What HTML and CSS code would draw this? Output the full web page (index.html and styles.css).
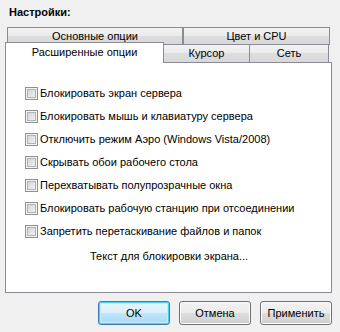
FILE: index.html
```html
<!DOCTYPE html>
<html lang="ru">
<head>
    <meta charset="UTF-8">
    <title>Настройки</title>
    <link rel="stylesheet" href="styles.css">
</head>
<body>
    <div class="dialog">
        <div class="title">Настройки:</div>

        <div class="tabs">
            <div class="tab-row back">
                <div class="tab t-main">Основные опции</div>
                <div class="tab t-color">Цвет и CPU</div>
            </div>
            <div class="tab-row front">
                <div class="tab active">Расширенные опции</div>
                <div class="tab t-cursor">Курсор</div>
                <div class="tab t-net">Сеть</div>
            </div>
        </div>

        <div class="panel">
            <label class="check"><input type="checkbox"> Блокировать экран сервера</label>
            <label class="check"><input type="checkbox"> Блокировать мышь и клавиатуру сервера</label>
            <label class="check"><input type="checkbox"> Отключить режим Аэро (Windows Vista/2008)</label>
            <label class="check"><input type="checkbox"> Скрывать обои рабочего стола</label>
            <label class="check"><input type="checkbox"> Перехватывать полупрозрачные окна</label>
            <label class="check"><input type="checkbox"> Блокировать рабочую станцию при отсоединении</label>
            <label class="check"><input type="checkbox"> Запретить перетаскивание файлов и папок</label>
            <div class="lock-text">Текст для блокировки экрана...</div>
        </div>

        <div class="buttons">
            <button class="btn default">OK</button>
            <button class="btn">Отмена</button>
            <button class="btn">Применить</button>
        </div>
    </div>
</body>
</html>
```

FILE: styles.css
```css
* {
    margin: 0;
    padding: 0;
    box-sizing: border-box;
}

body {
    background: #f0f0f0;
    font-family: 'Liberation Sans', Arial, sans-serif;
    font-size: 11px;
    color: #000;
}

.dialog {
    width: 340px;
    height: 332px;
    padding: 6px 8px 0 5px;
}

.title {
    font-weight: bold;
    line-height: 13px;
    padding-left: 4px;
    height: 21px;
}

/* tabs */
.tabs {
    padding-left: 2px;
    position: relative;
    z-index: 1;
}

.tab-row {
    display: flex;
    width: 323px;
}

.tab {
    text-align: center;
    border: 1px solid #898c95;
    border-bottom: none;
    background: linear-gradient(#f3f3f3, #ebebeb 45%, #dddddd 50%, #d8d8d8);
    line-height: 16px;
    height: 17px;
}

.back .tab {
    height: 18px;
}

.t-main {
    width: 176px;
}

.t-color {
    width: 147px;
}

.front {
    margin-top: -1px;
    height: 18px;
}

.front .tab {
    height: 18px;
    line-height: 17px;
}

.tab.active {
    width: 159px;
    height: 21px;
    margin-left: -2px;
    margin-top: -2px;
    background: #fff;
    line-height: 19px;
    position: relative;
    z-index: 2;
}

.t-cursor {
    width: 87px;
    margin-left: -1px;
}

.t-net {
    width: 80px;
    margin-left: -1px;
}

/* panel */
.panel {
    background: #fff;
    border: 1px solid #898c95;
    width: 327px;
    height: 231px;
    padding: 24px 0 0 19px;
}

.check {
    display: flex;
    align-items: center;
    height: 13px;
    margin-bottom: 10px;
    line-height: 13px;
    white-space: nowrap;
}

.check input {
    appearance: none;
    -webkit-appearance: none;
    width: 13px;
    height: 13px;
    margin-right: 2px;
    border: 1px solid #8e8f8f;
    background: linear-gradient(135deg, #cbcfd5, #f7f7f7);
    box-shadow: inset 0 0 0 1px #f4f4f4, inset 0 0 0 2px #aeb3b9;
    flex: none;
}

.lock-text {
    padding-left: 65px;
    margin-top: 12px;
    line-height: 13px;
}

/* buttons */
.buttons {
    display: flex;
    justify-content: flex-end;
    gap: 9px;
    margin-top: 8px;
}

.btn {
    width: 72px;
    height: 24px;
    font-family: inherit;
    font-size: 11px;
    color: #000;
    border: 1px solid #707070;
    border-radius: 3px;
    background: linear-gradient(#f2f2f2, #ebebeb 48%, #dddddd 52%, #cfcfcf);
    box-shadow: inset 0 0 0 1px #fcfcfc;
}

.btn.default {
    border-color: #3c7fb1;
    background: linear-gradient(#eaf6fd, #d9f0fc 48%, #bee6fd 52%, #a7d9f5);
    box-shadow: inset 0 0 0 1px #48d0f5, inset 0 0 0 2px #c7ebfa;
}
```
